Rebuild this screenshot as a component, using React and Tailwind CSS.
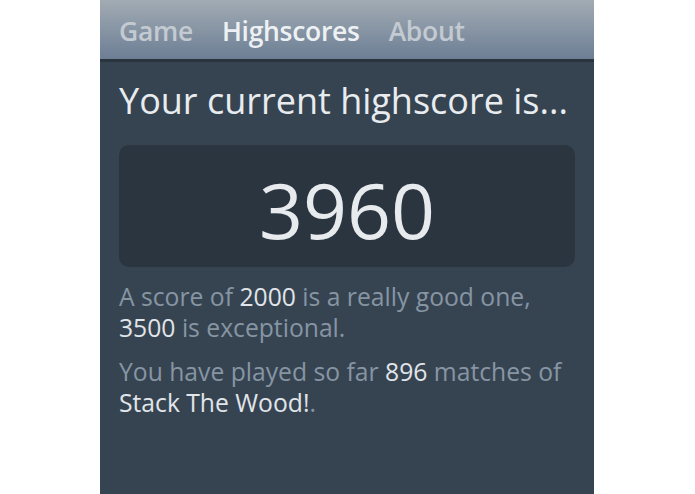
export default function App() {
  const font = { fontFamily: '"Open Sans", "Noto Sans", sans-serif' };
  return (
    <div className="w-[695px] h-[494px] bg-white flex justify-center" style={font}>
      <div className="w-[494px] h-full bg-[#364452] flex flex-col ml-[-1px]">
        <div className="h-[62px] shrink-0 bg-gradient-to-b from-[#a2abb3] to-[#6d7f95] border-b-[3px] border-[#2a343e] flex items-center gap-[29px] px-[19px] pt-[4px] text-[26.5px] font-semibold tracking-[-0.3px]">
          <span className="text-[#c3cad1]">Game</span>
          <span className="text-[#eef1f4]">Highscores</span>
          <span className="text-[#c3cad1]">About</span>
        </div>
        <div className="px-[19px] pt-[16px]">
          <h1 className="text-[36px] leading-[45px] text-[#e9ecef]">Your current highscore is...</h1>
          <div className="mt-[22px] h-[122px] w-[456px] rounded-[10px] bg-[#2a3540] flex items-center justify-center pt-[6px]">
            <span className="text-[77px] leading-none text-[#e8ebee] font-medium">3960</span>
          </div>
          <div className="mt-[14px] text-[24.7px] leading-[31px] text-[#8795a3]">
            <p>
              A score of <span className="text-[#e1e5e9]">2000</span> is a really good one,
              <br />
              <span className="text-[#e1e5e9]">3500</span> is exceptional.
            </p>
            <p className="mt-[13px]">
              You have played so far <span className="text-[#e1e5e9]">896</span> matches of
              <br />
              <span className="text-[#e1e5e9]">Stack The Wood!</span>.
            </p>
          </div>
        </div>
      </div>
    </div>
  );
}
